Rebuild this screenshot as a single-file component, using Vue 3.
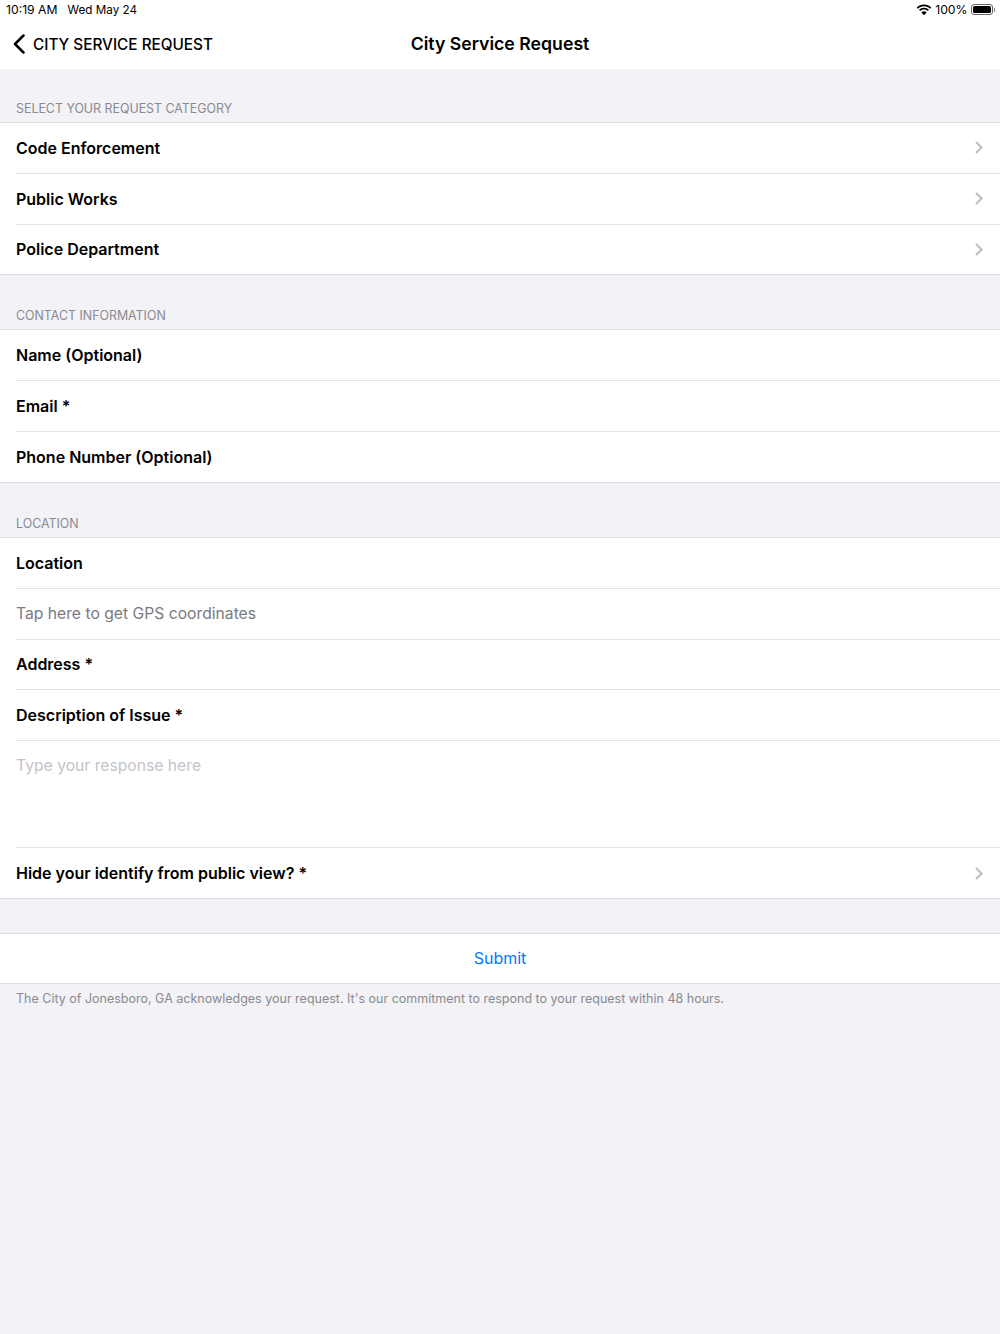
<script setup>
const sections = [
  {
    title: 'SELECT YOUR REQUEST CATEGORY',
    rows: [
      { label: 'Code Enforcement', chevron: true },
      { label: 'Public Works', chevron: true },
      { label: 'Police Department', chevron: true }
    ]
  },
  {
    title: 'CONTACT INFORMATION',
    rows: [
      { label: 'Name (Optional)' },
      { label: 'Email *' },
      { label: 'Phone Number (Optional)' }
    ]
  },
  {
    title: 'LOCATION',
    rows: [
      { label: 'Location' },
      { label: 'Tap here to get GPS coordinates', kind: 'hint' },
      { label: 'Address *' },
      { label: 'Description of Issue *' },
      { label: 'Type your response here', kind: 'placeholder' },
      { label: 'Hide your identify from public view? *', chevron: true }
    ]
  }
]
</script>

<template>
  <div class="screen">
    <div class="top">
      <div class="status-bar">
        <span class="time">10:19 AM</span>
        <span class="date">Wed May 24</span>
        <div class="status-right">
          <svg class="wifi" width="16" height="12" viewBox="0 0 16 12">
            <path d="M8 2.2c2.4 0 4.6.9 6.2 2.5l1.1-1.2C13.400 1.600 10.800.5 8 .5S2.600 1.600.7 3.500l1.100 1.200C3.400 3.100 5.600 2.200 8 2.200z" fill="#000" />
            <path d="M8 5.400c1.500 0 2.900.6 3.900 1.500l1.100-1.200C11.700 4.500 9.900 3.700 8 3.700s-3.700.8-5 2l1.100 1.200c1-.9 2.400-1.500 3.900-1.500z" fill="#000" />
            <path d="M8 11.200l2.600-2.800C9.900 7.700 9 7.300 8 7.300s-1.900.4-2.600 1.100L8 11.200z" fill="#000" />
          </svg>
          <span class="battery-pct">100%</span>
          <div class="battery"><div class="battery-fill"></div></div>
          <div class="battery-cap"></div>
        </div>
      </div>
      <div class="nav-bar">
        <div class="back">
          <svg width="12" height="20" viewBox="0 0 12 20">
            <path d="M10.500 1.500L2 10l8.500 8.500" fill="none" stroke="#000" stroke-width="2.500" stroke-linecap="round" stroke-linejoin="round" />
          </svg>
          <span class="back-label">CITY SERVICE REQUEST</span>
        </div>
        <h1 class="nav-title">City Service Request</h1>
      </div>
    </div>

    <section v-for="section in sections" :key="section.title" class="section">
      <h2 class="section-title">{{ section.title }}</h2>
      <div class="group">
        <div
          v-for="row in section.rows"
          :key="row.label"
          :class="['row', row.kind]"
        >
          <span class="row-label">{{ row.label }}</span>
          <svg v-if="row.chevron" class="chevron" width="8" height="13" viewBox="0 0 8 13">
            <path d="M1 1l5.500 5.500L1 12" fill="none" stroke="#c0c0c4" stroke-width="2.200" />
          </svg>
        </div>
      </div>
    </section>

    <div class="submit">Submit</div>
    <p class="footnote">The City of Jonesboro, GA acknowledges your request. It's our commitment to respond to your request within 48 hours.</p>
  </div>
</template>

<style>
html, body {
  margin: 0;
  background: #f2f2f7;
}
</style>

<style scoped>
.screen {
  width: 1000px;
  height: 1334px;
  overflow: hidden;
  background: #f2f2f7;
  font-family: Inter, "Liberation Sans", sans-serif;
  color: #000;
}

.top {
  height: 69px;
  background: #fff;
}

.status-bar {
  height: 19px;
  display: flex;
  align-items: center;
  padding: 0 6px;
  font-size: 12.200px;
  color: #000;
}

.date {
  margin-left: 10px;
  font-size: 11.700px;
}

.status-right {
  margin-left: auto;
  display: flex;
  align-items: center;
}

.wifi {
  margin-right: 3px;
}

.battery-pct {
  margin-right: 3px;
}

.battery {
  width: 22px;
  height: 11px;
  box-sizing: border-box;
  border: 1px solid #666;
  border-radius: 3px;
  padding: 1px;
}

.battery-fill {
  height: 100%;
  background: #000;
  border-radius: 1.500px;
}

.battery-cap {
  width: 1.500px;
  height: 4px;
  margin-left: 1px;
  margin-right: -1px;
  background: #777;
  border-radius: 0 1px 1px 0;
}

.nav-bar {
  position: relative;
  height: 50px;
  display: flex;
  align-items: center;
  justify-content: center;
}

.back {
  position: absolute;
  left: 13px;
  top: 0;
  height: 50px;
  display: flex;
  align-items: center;
  gap: 8px;
}

.back-label {
  font-size: 15.300px;
  font-weight: 500;
}

.nav-title {
  margin: 0 0 2px;
  font-size: 17.700px;
  font-weight: 600;
}

.section-title {
  margin: 0;
  height: 54.100px;
  box-sizing: border-box;
  padding: 0 16px 5px;
  display: flex;
  align-items: flex-end;
  font-size: 12.400px;
  line-height: 16px;
  font-weight: 400;
  color: #8a8a8f;
}

.section:first-of-type .section-title {
  height: 53px;
}

.group {
  background: #fff;
  border-bottom: 1px solid #dfdfe3;
}

.row {
  position: relative;
  height: 50.800px;
  box-sizing: border-box;
  padding: 1px 16px 0;
  display: flex;
  align-items: center;
  justify-content: space-between;
  font-size: 16px;
  font-weight: 600;
}

.row::before {
  content: '';
  position: absolute;
  left: 16px;
  right: 0;
  top: 0;
  height: 1px;
  background: #e3e3e6;
}

.row:first-child::before {
  left: 0;
  background: #dfdfe3;
}

.row.hint {
  font-size: 15.700px;
  font-weight: 400;
  color: #7a7a80;
}

.row.placeholder {
  height: 107px;
  align-items: flex-start;
  padding-top: 16px;
  font-size: 15.700px;
  font-weight: 400;
  color: #c4c4c7;
}

.chevron {
  margin-right: 1px;
}

.submit {
  margin-top: 34px;
  height: 51px;
  box-sizing: border-box;
  background: #fff;
  border-top: 1px solid #dfdfe3;
  border-bottom: 1px solid #dfdfe3;
  display: flex;
  align-items: center;
  justify-content: center;
  font-size: 16px;
  color: #007aff;
}

.footnote {
  margin: 7px 16px 0;
  font-size: 12.500px;
  line-height: 16px;
  color: #8a8a8f;
}
</style>
